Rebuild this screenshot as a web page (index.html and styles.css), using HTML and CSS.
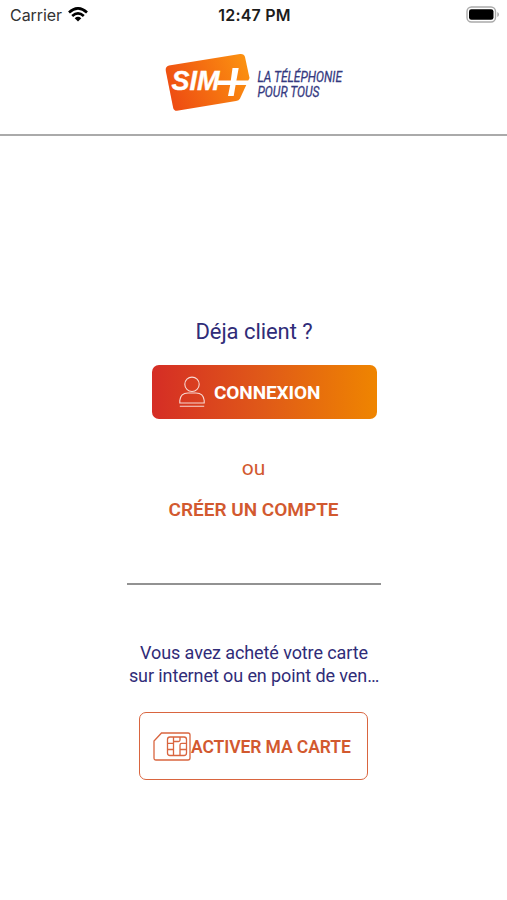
FILE: index.html
```html
<!DOCTYPE html>
<html lang="fr">
<head>
<meta charset="utf-8">
<title>SIM+</title>
<link rel="stylesheet" href="styles.css">
</head>
<body>
<div class="status">
  <div class="carrier"><span>Carrier</span>
    <svg class="wifi" width="20" height="15" viewBox="0 0 20 15"><g fill="none" stroke="#000" stroke-width="2.7"><path d="M1 5.4Q10-2.6 19 5.4"/><path d="M4.2 9Q10 3.8 15.8 9"/></g><path d="M6.7 11.2Q10 8.3 13.3 11.2L10 14.5Z"/></svg>
  </div>
  <div class="time">12:47 PM</div>
  <svg class="battery" width="34" height="17" viewBox="0 0 34 17"><rect x="1" y="1" width="28.5" height="15" rx="4.5" fill="#fff" stroke="#aaa" stroke-width="1.4"/><rect x="3" y="3.2" width="24.5" height="10.6" rx="2.4"/><path d="M31.3 6v5q1.700-.8 1.700-2.500t-1.700-2.500" fill="#aaa"/></svg>
</div>
<header class="header">
  <svg class="logo" width="200" height="64" viewBox="0 0 200 64">
    <defs><linearGradient id="tag" x1="0" y1="0.6" x2="1" y2="0.3"><stop offset="0" stop-color="#ee4c12"/><stop offset="1" stop-color="#fb9010"/></linearGradient></defs>
    <path d="M5 14.500L76 3Q80 2.500 81 6L85.500 27L76 47.500Q75 49.500 72 50L13 59.800Q10 60 9.200 57L1.800 20Q1 15.500 5 14.500Z" fill="url(#tag)"/>
    <text class="brand" x="7.500" y="39" textLength="48" lengthAdjust="spacingAndGlyphs">SIM</text>
    <path d="M68.500 17H74.700L72.400 29.500H85.800L84 34H71.600L69.700 45H64L66.200 34H53L54 29.500H66.800Z" fill="#fff"/>
    <text class="tagline" x="93.500" y="30.500" textLength="84.500" lengthAdjust="spacingAndGlyphs">LA TÉLÉPHONIE</text>
    <text class="tagline" x="93.500" y="45.500" textLength="62" lengthAdjust="spacingAndGlyphs">POUR TOUS</text>
  </svg>
</header>
<main class="main">
  <p class="question">Déja client ?</p>
  <button class="login">
    <svg width="28" height="32" viewBox="0 0 28 32" fill="none" stroke="#fff" stroke-opacity=".8" stroke-width="1.1"><circle cx="14" cy="8.300" r="7.200"/><path d="M1.800 27v-2.500Q2.500 17 10 17h8Q25.500 17 26.200 24.500V27ZM1.800 30.200H26.200"/></svg>
    <span>CONNEXION</span>
  </button>
  <p class="or">ou</p>
  <a class="create">CRÉER UN COMPTE</a>
  <hr class="rule">
  <p class="info">Vous avez acheté votre carte<br>sur internet ou en point de ven…</p>
  <button class="activate">
    <svg width="38" height="29" viewBox="0 0 38 29" fill="none" stroke="#d9653f" stroke-width="1.300"><path d="M8.500 1H35Q37 1 37 3V26Q37 28 35 28H3Q1 28 1 26V9Z"/><rect x="14.500" y="5" width="19" height="18.500" rx="2.500"/><path d="M14.500 11.300H20.500M14.500 17.500H20.500M20.500 5V23.500M20.500 17.500H20.500M27 23.500V13Q27 11.300 28.700 11.300H33.500M27 17.500H33.500M20.500 9.500H25.500Q27 9.500 27 8V5"/></svg>
    <span>ACTIVER MA CARTE</span>
  </button>
</main>
</body>
</html>
```
FILE: styles.css
```css
* { box-sizing: border-box; }
body { margin: 0; height: 900px; background: #fff; font-family: Roboto, "Liberation Sans", sans-serif; overflow: hidden; }
p { margin: 0; white-space: nowrap; }
button { font: inherit; padding: 0; display: flex; align-items: center; white-space: nowrap; }
.status { height: 30px; display: grid; grid-template-columns: 1fr auto 1fr; align-items: center; padding: 0 7px 0 10px; font-family: Inter, sans-serif; font-size: 16px; color: #333; }
.carrier { display: flex; align-items: center; gap: 6px; letter-spacing: -0.05px; }
.wifi { margin-top: -2px; }
.time { font-weight: 600; letter-spacing: 0.2px; color: #1c1c1c; padding-right: 1px; }
.battery { justify-self: end; margin-top: -2px; }
.header { height: 106px; border-bottom: 2px solid #aaa; padding: 21px 0 0 164px; }
.logo { display: block; }
.brand { font: italic 700 27px "Liberation Sans", sans-serif; fill: #fff; stroke: #fff; stroke-width: 0.4px; }
.tagline { font: italic 400 15.5px Roboto, sans-serif; fill: #34397f; stroke: #34397f; stroke-width: 0.3px; }
.main { display: flex; flex-direction: column; align-items: center; padding-top: 182px; }
.question { font-size: 22px; line-height: 28px; color: #302c78; letter-spacing: -0.05px; padding-left: 1px; }
.login { align-self: flex-start; width: 225px; height: 54px; margin: 19px 0 0 152px; border: 0; border-radius: 7px; background: linear-gradient(90deg, #d52d25, #e05a18 50%, #ef8500); color: #fff; font-size: 19px; font-weight: 700; letter-spacing: -0.1px; padding-left: 26px; gap: 8px; }
.or { margin-top: 35px; font-size: 21px; line-height: 28px; color: #d2592f; }
.create { margin-top: 14px; font-size: 19px; line-height: 28px; font-weight: 600; color: #d2592f; }
.rule { width: 254px; height: 2px; margin: 59px 0 0; border: 0; background: #929292; }
.info { margin-top: 56px; font-size: 18px; line-height: 23px; text-align: center; color: #302c78; letter-spacing: -0.1px; padding-left: 1px; }
.activate { width: 229px; height: 68px; margin: 25px 0 0; border: 1.5px solid #d9653f; border-radius: 7px; background: #fff; color: #d2592f; font-size: 17.500px; font-weight: 600; letter-spacing: -0.08px; padding-left: 13px; }
.activate span { padding-top: 2px; }
```
